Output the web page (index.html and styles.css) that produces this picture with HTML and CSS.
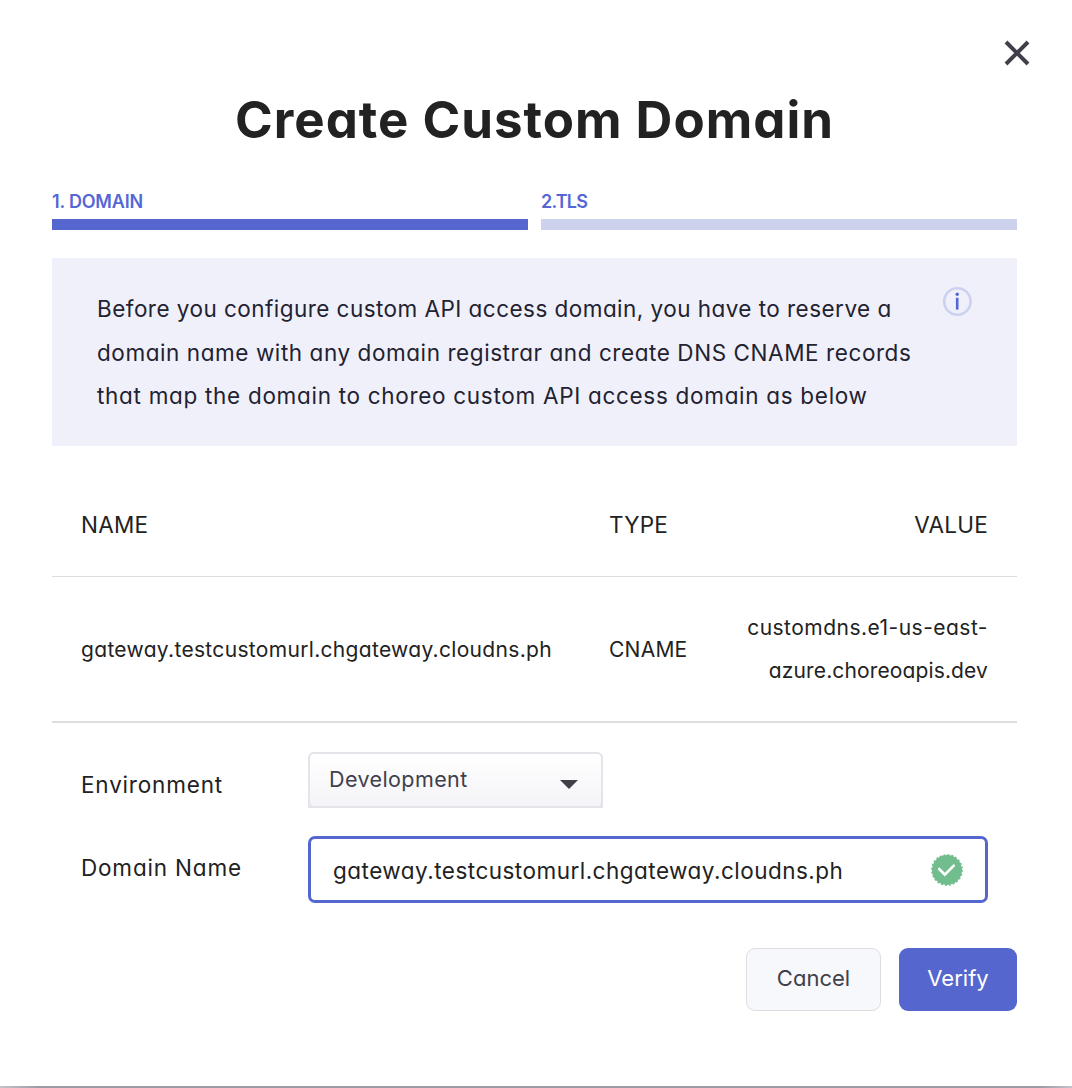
FILE: index.html
```html
<!DOCTYPE html>
<html lang="en">
<head>
<meta charset="utf-8">
<title>Create Custom Domain</title>
<link rel="stylesheet" href="styles.css">
</head>
<body>
<main class="dialog">
  <button class="close" aria-label="Close">
    <svg width="26" height="26" viewBox="0 0 26 26"><path d="M2 2 24 24M24 2 2 24" fill="none" stroke="#40404b" stroke-width="4"/></svg>
  </button>
  <h1 class="title">Create Custom Domain</h1>
  <div class="steps">
    <div class="step step-active">1. DOMAIN</div>
    <div class="step step-next">2.TLS</div>
  </div>
  <section class="notice">
    <p class="notice-text"><span class="line-1">Before you configure custom API access domain, you have to reserve a</span><br><span class="line-2">domain name with any domain registrar and create DNS CNAME records</span><br><span class="line-3">that map the domain to choreo custom API access domain as below</span></p>
    <svg class="info" width="30" height="30" viewBox="0 0 30 30"><circle cx="15.4" cy="14.5" r="13.2" fill="none" stroke="#ccd1f0" stroke-width="2.6"/><circle cx="15.2" cy="7.2" r="1.7" fill="#5567d5"/><path d="M15.2 10.8v11.8" stroke="#5567d5" stroke-width="2.6"/></svg>
  </section>
  <div class="records">
    <div class="row head"><span>NAME</span><span>TYPE</span><span class="value">VALUE</span></div>
    <div class="row record"><span class="host">gateway.testcustomurl.chgateway.cloudns.ph</span><span class="kind">CNAME</span><span class="value"><span class="target-1">customdns.e1-us-east-</span><br><span class="target-2">azure.choreoapis.dev</span></span></div>
  </div>
  <form class="form">
    <div class="field env"><label>Environment</label>
      <div class="select-edge"><div class="select"><span>Development</span><svg class="arrow" width="18" height="9" viewBox="0 0 18 9"><path d="M0 0h18L9 9z" fill="#40404b"/></svg></div></div>
    </div>
    <div class="field domain"><label>Domain Name</label>
      <div class="input"><span>gateway.testcustomurl.chgateway.cloudns.ph</span><svg width="32" height="32" viewBox="0 0 32 32"><circle cx="16" cy="16" r="15" fill="#71bd8e"/><circle cx="16" cy="16" r="15.2" fill="none" stroke="#71bd8e" stroke-width="1.4" stroke-dasharray="2 1.979"/><path d="m8.2 15 5.6 5.6 9-9" fill="none" stroke="#fff" stroke-width="2.6" stroke-linecap="round"/></svg></div>
    </div>
    <div class="actions"><button type="button" class="button">Cancel</button><button type="button" class="button primary">Verify</button></div>
  </form>
</main>
</body>
</html>
```
FILE: styles.css
```css
* { box-sizing: border-box; }
body {
  margin: 0;
  background: #fff;
  color: #222;
  font-family: Inter, "Noto Sans", sans-serif;
  font-size: 22.5px;
  font-weight: 400;
  font-feature-settings: "cv11";
}
.dialog {
  display: flex;
  flex-direction: column;
  height: 1088px;
  padding: 0 55px 0 52px;
  background: linear-gradient(90deg, #c4c3c9, #9c9ba5 40px, #9c9ba5 1040px, #c4c3c9) bottom / 100% 2px no-repeat;
}
.close { display: flex; align-self: flex-end; margin: 40px -13px 0 0; padding: 0; border: 0; background: none; }
.title {
  height: 64px;
  margin: 22px 0 0;
  font-size: 51px;
  line-height: 64px;
  font-weight: 660;
  letter-spacing: 1px;
  text-align: center;
  white-space: nowrap;
}
.steps { display: grid; grid-template-columns: 1fr 1fr; gap: 13px; margin-top: 39px; }
.step { height: 39px; border-bottom: 11px solid #ccd1ee; color: #5567d5; font-size: 18px; line-height: 21px; font-weight: 600; }
.step-active { border-color: #5567ce; letter-spacing: -0.2px; }
.step-next { letter-spacing: -0.8px; }

.notice { display: flex; justify-content: space-between; height: 188px; margin-top: 28px; padding: 29px 45px 0; background: #f0f0fb; }
.notice-text { margin: 0; line-height: 43.5px; color: #222230; white-space: nowrap; }
.line-1 { letter-spacing: 0.46px; }
.line-2 { letter-spacing: 0.57px; }
.line-3 { letter-spacing: 0.7px; }
.info { flex: none; }

.row { display: grid; grid-template-columns: 528px 125px 1fr; align-items: center; padding: 0 29px; white-space: nowrap; }
.head { height: 131px; padding-top: 27px; border-bottom: 1px solid #dedede; letter-spacing: 0.25px; }
.record { height: 146px; border-bottom: 2px solid #dedede; line-height: 43px; font-size: 21px; }
.host { letter-spacing: 0.32px; }
.kind { letter-spacing: 0.25px; }
.value { text-align: right; }
.target-1 { letter-spacing: 0.48px; }
.target-2 { letter-spacing: 0.13px; }

.form { margin: 29px 0 0; white-space: nowrap; }
.field { display: flex; width: 936px; padding-left: 29px; }
.field label { width: 227px; padding-top: 19px; letter-spacing: 0.82px; }
.domain label { padding-top: 18px; }
.env { height: 84px; }
.select-edge { height: 56px; border-radius: 6px 6px 0 0; background: #e5e4eb; }
.select {
  display: flex;
  justify-content: space-between;
  align-items: center;
  width: 295px;
  height: 56px;
  padding: 0 23px 2px 19px;
  border: 2px solid #e5e4eb;
  border-radius: 6px;
  background: linear-gradient(#fff, #f4f4f8);
  color: #40404b;
  font-size: 21.5px;
  letter-spacing: 0.4px;
}
.arrow { margin-top: 10px; }
.input {
  display: flex;
  align-items: center;
  justify-content: space-between;
  flex: 1;
  height: 67px;
  padding: 0 22px;
  border: 3px solid #5567ce;
  border-radius: 7px;
  letter-spacing: 0.48px;
}
.input span { padding-top: 2px; }
.actions { display: flex; justify-content: flex-end; gap: 18px; margin-top: 45px; }
.button {
  width: 135px;
  height: 63px;
  padding-bottom: 4px;
  border: 1px solid #dedede;
  border-radius: 9px;
  background: #f7f8fc;
  color: #40404b;
  font: inherit;
  font-size: 22px;
  font-feature-settings: inherit;
}
.primary { width: 118px; border: 0; background: #5567ce; color: #fff; }
```
